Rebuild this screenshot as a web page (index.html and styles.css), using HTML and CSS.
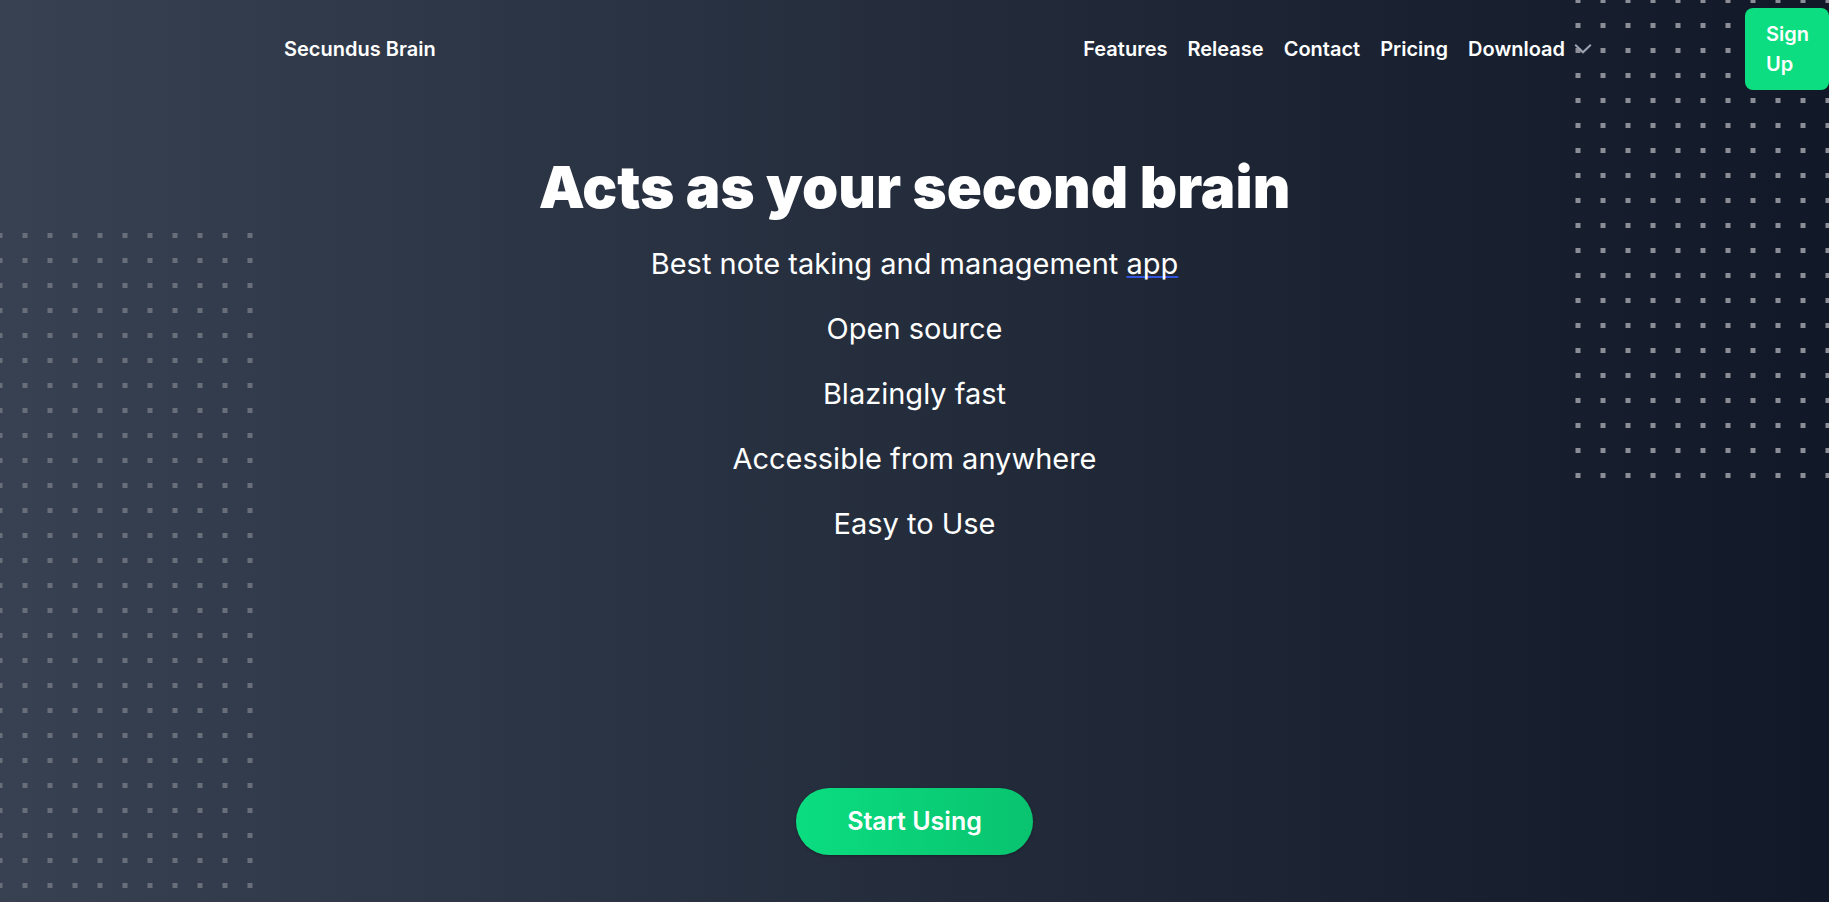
FILE: index.html
```html
<!DOCTYPE html>
<html lang="en">
<head>
<meta charset="utf-8">
<meta name="viewport" content="width=device-width, initial-scale=1">
<title>Secundus Brain</title>
<link rel="stylesheet" href="styles.css">
</head>
<body>
<div class="page">
  <svg class="dots dots-left" width="255" height="658" aria-hidden="true">
    <defs>
      <pattern id="grid-left" width="25" height="25" patternUnits="userSpaceOnUse">
        <rect x="0" width="2.5" height="5"/><rect x="22.5" width="2.5" height="5"/>
      </pattern>
    </defs>
    <rect width="255" height="658" fill="url(#grid-left)"/>
  </svg>
  <svg class="dots dots-right" width="254" height="478" aria-hidden="true">
    <defs>
      <pattern id="grid-right" y="-2" width="25" height="25" patternUnits="userSpaceOnUse">
        <rect x="0.5" width="5" height="5"/>
      </pattern>
    </defs>
    <rect width="254" height="478" fill="url(#grid-right)"/>
  </svg>
  <header class="header">
    <a class="brand" href="#">Secundus Brain</a>
    <nav class="nav" aria-label="Main">
      <a href="#">Features</a>
      <a href="#">Release</a>
      <a href="#">Contact</a>
      <a href="#">Pricing</a>
      <button class="download" type="button">Download
        <svg class="chevron" viewBox="0 0 18 12" width="18" height="12" aria-hidden="true"><path d="M1.2 1.7 9 9.3 16.8 1.7"/></svg>
      </button>
    </nav>
    <a class="signup" href="#">Sign<br>Up</a>
  </header>
  <main class="hero">
    <h1>Acts as your second brain</h1>
    <p>Best note taking and management <span class="marked">app</span></p>
    <p>Open source</p>
    <p>Blazingly fast</p>
    <p>Accessible from anywhere</p>
    <p>Easy to Use</p>
    <a class="start" href="#">Start Using</a>
  </main>
</div>
</body>
</html>
```
FILE: styles.css
```css
* { box-sizing: border-box; }
body {
  margin: 0;
  font-family: Inter, Roboto, sans-serif;
  color: #fff;
}
.page {
  position: relative;
  min-height: 100vh;
  overflow: hidden;
  background: linear-gradient(to right, #374151, #111827);
}
.dots { position: absolute; }
.dots-left { left: 0; top: 233px; fill: #696f7a; }
.dots-right { right: 0; top: 0; fill: #8b8e96; }
.header {
  position: relative;
  display: flex;
  align-items: center;
  padding: 8px 0 0 284px;
  font-size: 20px;
  font-weight: 600;
  line-height: 30px;
}
a { color: inherit; text-decoration: none; }
.nav {
  display: flex;
  gap: 20px;
  margin-left: auto;
  margin-right: 153px;
}
.download {
  display: flex;
  align-items: center;
  gap: 9px;
  padding: 0;
  border: 0;
  background: none;
  color: inherit;
  font: inherit;
}
.chevron { fill: none; stroke: #9ca3af; stroke-width: 2; }
.signup {
  width: 84px;
  padding: 11px 0 11px 21px;
  border-radius: 8px;
  background: #0bdd80;
}
.hero {
  position: relative;
  display: flex;
  flex-direction: column;
  align-items: center;
  padding: 60px 20px 47px;
  text-align: center;
}
h1 {
  margin: 0 0 16px;
  font-size: 58px;
  font-weight: 900;
  line-height: 75px;
}
p {
  margin: 0 0 20px;
  font-size: 29px;
  line-height: 45px;
}
.marked {
  text-decoration: underline 2px #3453dc;
  text-decoration-skip-ink: none;
  text-underline-offset: 2px;
}
.start {
  margin-top: 222px;
  padding: 16px 51px;
  border-radius: 34px;
  background: linear-gradient(to right, #0bdd80, #09c36f);
  box-shadow: 0 1px 3px rgba(0, 0, 0, 0.3);
  font-size: 25px;
  font-weight: 600;
  line-height: 35px;
}
```
